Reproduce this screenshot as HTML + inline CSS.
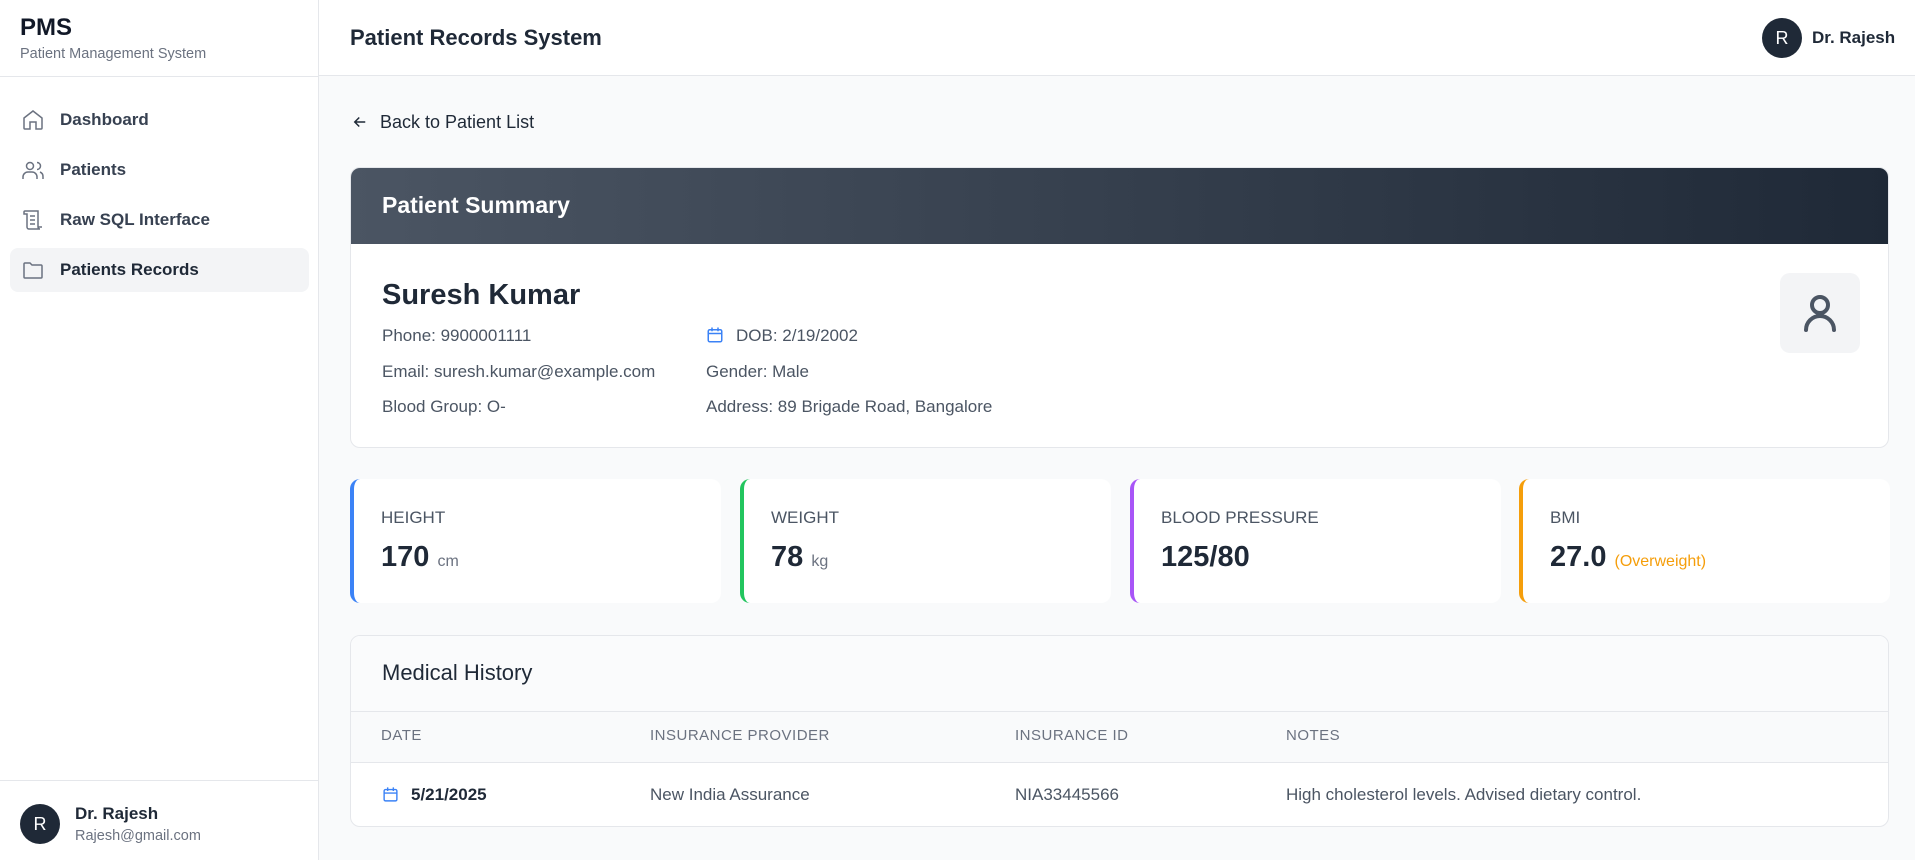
<!DOCTYPE html>
<html><head><meta charset="utf-8"><style>
*{box-sizing:border-box;margin:0;padding:0}
body{width:1915px;height:860px;overflow:hidden;background:#f9fafb;font-family:"Liberation Sans",sans-serif;color:#1f2937;position:relative}
.a{position:absolute;white-space:nowrap}
.side{position:absolute;left:0;top:0;width:319px;height:860px;background:#fff;border-right:1px solid #e5e7eb}
.top{position:absolute;left:319px;top:0;right:0;height:76px;background:#fff;border-bottom:1px solid #e5e7eb}
.nav{position:absolute;left:10px;width:299px;height:44px;border-radius:8px;font-size:17px;color:#374151;font-weight:bold}
.nav svg{position:absolute;left:11px;top:10px}
.nav span{position:absolute;left:50px;top:12px}
.card{position:absolute;background:#fff;border:1px solid #e5e7eb;border-radius:10px;overflow:hidden}
.row{font-size:17px;color:#4b5563}
.stat{position:absolute;top:479px;width:371px;height:124px;background:#fff;border-radius:10px;border-left:4px solid}
.stat .l{position:absolute;left:27px;top:29px;font-size:17px;color:#4b5563}
.stat .v{position:absolute;left:27px;top:62px;font-size:29px;font-weight:bold;color:#1f2937}
.stat .v small{font-size:16px;font-weight:normal;color:#6b7280}
.th{position:absolute;top:727px;font-size:15px;color:#6b7280;letter-spacing:.5px}
.td{position:absolute;top:785px;font-size:17px;color:#4b5563}
</style></head><body>
<div class="side">
 <div class="a" style="left:20px;top:14px;font-size:24px;font-weight:bold;color:#111827">PMS</div>
 <div class="a" style="left:20px;top:46px;font-size:14.5px;color:#6b7280">Patient Management System</div>
 <div style="position:absolute;left:0;right:0;top:76px;border-top:1px solid #e5e7eb"></div>
 <div class="nav" style="top:98px"><svg width="24" height="24" viewBox="0 0 24 24" fill="none" stroke="#6b7280" stroke-width="1.5"><path d="M3 10l9-7 9 7v10a1 1 0 0 1-1 1h-5v-7h-6v7H4a1 1 0 0 1-1-1z"/></svg><span>Dashboard</span></div>
 <div class="nav" style="top:148px"><svg width="24" height="24" viewBox="0 0 24 24" fill="none" stroke="#6b7280" stroke-width="1.5"><circle cx="9" cy="8" r="3.5"/><path d="M2 21v-2a5 5 0 0 1 5-5h4a5 5 0 0 1 5 5v2"/><path d="M16 4.5a3.5 3.5 0 0 1 0 7M19 14a5 5 0 0 1 3 5v2"/></svg><span>Patients</span></div>
 <div class="nav" style="top:198px"><svg width="24" height="24" viewBox="0 0 24 24" fill="none" stroke="#6b7280" stroke-width="1.5"><path d="M5 3h12v16a2 2 0 0 0 2 2H8a2 2 0 0 1-2-2V6H3V4a1 1 0 0 1 1-1zM9 8h5M9 12h5M9 16h5M17 19h4"/></svg><span>Raw SQL Interface</span></div>
 <div class="nav" style="top:248px;background:#f3f4f6;color:#1f2937"><svg width="24" height="24" viewBox="0 0 24 24" fill="none" stroke="#6b7280" stroke-width="1.5"><path d="M3 6a1 1 0 0 1 1-1h5l2 2h9a1 1 0 0 1 1 1v11a1 1 0 0 1-1 1H4a1 1 0 0 1-1-1z"/></svg><span>Patients Records</span></div>
 <div style="position:absolute;left:0;right:0;top:780px;border-top:1px solid #e5e7eb"></div>
 <div class="a" style="left:20px;top:804px;width:40px;height:40px;border-radius:50%;background:#1f2937;color:#fff;font-size:18px;text-align:center;line-height:40px">R</div>
 <div class="a" style="left:75px;top:804px;font-size:17px;font-weight:bold;color:#1f2937">Dr. Rajesh</div>
 <div class="a" style="left:75px;top:828px;font-size:14.5px;color:#6b7280">Rajesh@gmail.com</div>
</div>
<div class="top">
 <div class="a" style="left:31px;top:25px;font-size:22px;font-weight:bold;color:#1f2937">Patient Records System</div>
 <div class="a" style="left:1443px;top:18px;width:40px;height:40px;border-radius:50%;background:#1f2937;color:#fff;font-size:18px;text-align:center;line-height:40px">R</div>
 <div class="a" style="left:1493px;top:28px;font-size:17px;font-weight:bold;color:#1f2937">Dr. Rajesh</div>
</div>
<svg class="a" style="left:351px;top:113px" width="18" height="18" viewBox="0 0 24 24" fill="none" stroke="#1f2937" stroke-width="2"><path d="M19 12H5M11 6l-6 6 6 6"/></svg>
<div class="a" style="left:380px;top:112px;font-size:18px;color:#1f2937">Back to Patient List</div>
<div class="card" style="left:350px;top:167px;width:1539px;height:281px">
 <div style="height:76px;background:linear-gradient(90deg,#4b5563,#1f2937);position:relative"><div class="a" style="left:31px;top:24px;font-size:23px;font-weight:bold;color:#fff">Patient Summary</div></div>
 <div class="a" style="left:31px;top:111px;font-size:29px;font-weight:bold;color:#1f2937">Suresh Kumar</div>
 <div class="a row" style="left:31px;top:158px">Phone: 9900001111</div>
 <div class="a row" style="left:31px;top:194px">Email: suresh.kumar@example.com</div>
 <div class="a row" style="left:31px;top:229px">Blood Group: O-</div>
 <svg class="a" style="left:355px;top:158px" width="18" height="18" viewBox="0 0 24 24" fill="none" stroke="#3b82f6" stroke-width="2"><rect x="3" y="5" width="18" height="16" rx="2"/><path d="M3 10h18M8 2v5M16 2v5"/></svg>
 <div class="a row" style="left:385px;top:158px">DOB: 2/19/2002</div>
 <div class="a row" style="left:355px;top:194px">Gender: Male</div>
 <div class="a row" style="left:355px;top:229px">Address: 89 Brigade Road, Bangalore</div>
 <div class="a" style="left:1429px;top:105px;width:80px;height:80px;border-radius:10px;background:#f3f4f6"><svg style="position:absolute;left:16px;top:16px" width="48" height="48" viewBox="0 0 24 24" fill="none" stroke="#4b5563" stroke-width="2" stroke-linecap="round"><circle cx="12" cy="8" r="4"/><path d="M5 20.5a7 7 0 0 1 14 0"/></svg></div>
</div>
<div class="stat" style="left:350px;border-color:#3b82f6"><div class="l">HEIGHT</div><div class="v">170 <small>cm</small></div></div>
<div class="stat" style="left:740px;border-color:#22c55e"><div class="l">WEIGHT</div><div class="v">78 <small>kg</small></div></div>
<div class="stat" style="left:1130px;border-color:#a855f7"><div class="l">BLOOD PRESSURE</div><div class="v">125/80</div></div>
<div class="stat" style="left:1519px;border-color:#f59e0b"><div class="l">BMI</div><div class="v">27.0 <small style="color:#f59e0b">(Overweight)</small></div></div>
<div class="card" style="left:350px;top:635px;width:1539px;height:192px;background:#fff">
 <div style="height:76px;background:#fafbfc;border-bottom:1px solid #e5e7eb"></div>
 <div style="position:absolute;top:76px;left:0;right:0;height:51px;background:#f9fafb;border-bottom:1px solid #e5e7eb"></div>
 <div class="a" style="left:31px;top:24px;font-size:22px;color:#1f2937">Medical History</div>
</div>
<div class="th" style="left:381px">DATE</div>
<div class="th" style="left:650px">INSURANCE PROVIDER</div>
<div class="th" style="left:1015px">INSURANCE ID</div>
<div class="th" style="left:1286px">NOTES</div>
<svg class="a" style="left:382px;top:786px" width="17" height="17" viewBox="0 0 24 24" fill="none" stroke="#3b82f6" stroke-width="2"><rect x="3" y="5" width="18" height="16" rx="2"/><path d="M3 10h18M8 2v5M16 2v5"/></svg>
<div class="td" style="left:411px;font-weight:bold;color:#1f2937">5/21/2025</div>
<div class="td" style="left:650px">New India Assurance</div>
<div class="td" style="left:1015px">NIA33445566</div>
<div class="td" style="left:1286px">High cholesterol levels. Advised dietary control.</div>
</body></html>
